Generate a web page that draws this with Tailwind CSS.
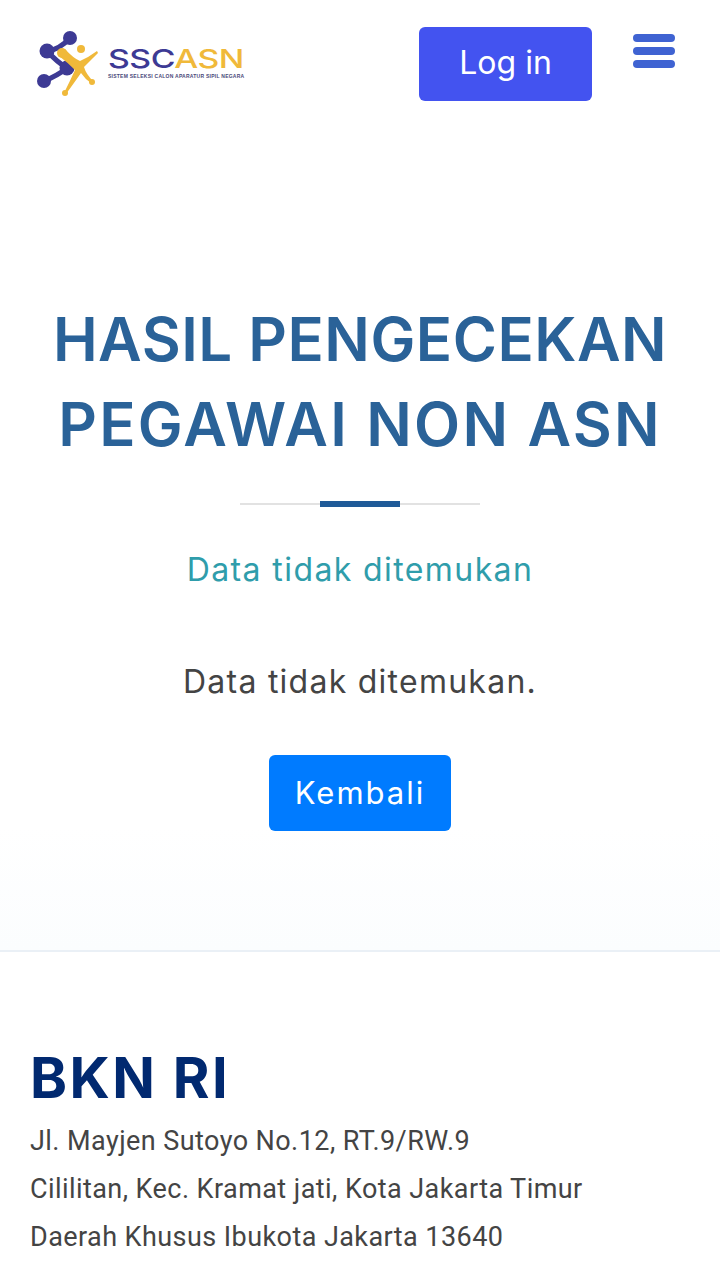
<!DOCTYPE html>
<html lang="en">
<head>
  <meta charset="UTF-8" />
  <meta name="viewport" content="width=device-width, initial-scale=1.0"/>
  <title>SSCASN</title>
  <script src="https://cdn.jsdelivr.net/npm/@tailwindcss/browser@4"></script>
</head>
<body class="bg-white font-['Inter',sans-serif] overflow-hidden h-[1267px]">
  <header class="h-[128px] flex items-start pl-[37px] pr-[45px]">
    <div class="flex items-start mt-[29px] w-[206px] shrink-0">
      <svg width="66" height="70" viewBox="0 0 66 70" class="shrink-0">
        <path d="M33 9 Q22 21 10 22 Q20 33 30 39 Q20 47 7 52" fill="none" stroke="#3d3a94" stroke-width="5"/>
        <g fill="#3d3a94">
          <circle cx="33" cy="9" r="7"/>
          <circle cx="10" cy="22" r="7.5"/>
          <circle cx="30" cy="39" r="7.5"/>
          <circle cx="7" cy="52" r="7"/>
        </g>
        <g fill="#f0b93a">
          <path d="M22 27 L28 20 Q36 29 43 32 Q52 28 60 22 L61 24 Q52 33 47 38 Q49 45 56 52 L54 54 Q48 50 44 44 Q37 54 29 65 L27 64 Q33 52 38 41 Q30 33 22 27 Z"/>
          <circle cx="44" cy="20" r="4"/>
          <circle cx="25" cy="24" r="5"/>
          <circle cx="28" cy="64" r="3"/>
          <circle cx="55" cy="53" r="3"/>
        </g>
      </svg>
      <div class="ml-[5px] mt-[18px] w-[135px] shrink-0">
        <div class="font-['Inter',sans-serif] font-medium text-[26px] leading-[23px] whitespace-nowrap w-[104px] scale-x-[1.3] origin-left tracking-[-0.4px]"><span class="text-[#3d3a94]">SSC</span><span class="text-[#f0b93a]">ASN</span></div>
        <div class="mt-[4px] font-['Liberation_Sans',sans-serif] text-[5px] leading-[5px] font-bold text-[#4a4a7a] whitespace-nowrap tracking-[0.25px]">SISTEM SELEKSI CALON APARATUR SIPIL NEGARA</div>
      </div>
    </div>
    <a class="ml-[176px] mt-[27px] w-[173px] h-[74px] pb-[3px] rounded-[6px] bg-[#4353f0] text-white text-[32px] flex items-center justify-center">Log in</a>
    <div class="ml-[41px] mt-[34px] flex flex-col gap-[5px] w-[42px]">
      <span class="h-[8px] rounded-full bg-[#3f63d2]"></span>
      <span class="h-[8px] rounded-full bg-[#3f63d2]"></span>
      <span class="h-[8px] rounded-full bg-[#3f63d2]"></span>
    </div>
  </header>

  <main class="h-[824px] pt-[169px] flex flex-col items-center text-center bg-gradient-to-b from-white from-85% to-[#fbfdfe] border-b-2 border-[#eaf0f6]">
    <h1 class="text-[60px] leading-[85px] font-semibold text-[#2a6298]"><span class="tracking-[0.5px]">HASIL PENGECEKAN</span><br><span class="tracking-[2.2px]">PEGAWAI NON ASN</span></h1>
    <div class="relative mt-[36px] w-[240px] h-[2px] bg-[#e2e2e2]">
      <span class="absolute left-[80px] top-[-2px] w-[80px] h-[6px] bg-[#1f5a98]"></span>
    </div>
    <p class="mt-[41px] text-[32px] leading-[48px] tracking-[1.4px] text-[#2f9dab]">Data tidak ditemukan</p>
    <p class="mt-[64px] text-[32px] leading-[48px] tracking-[1.25px] text-[#444444]">Data tidak ditemukan.</p>
    <a class="mt-[49px] w-[182px] h-[76px] rounded-[6px] bg-[#007bff] text-white text-[31px] tracking-[2px] flex items-center justify-center">Kembali</a>
  </main>

  <footer class="pl-[30px] pt-[93px]">
    <h2 class="text-[56px] leading-[66px] font-bold text-[#012970] tracking-[2.4px]">BKN RI</h2>
    <div class="font-['Roboto',sans-serif] text-[#444444] text-[27px] leading-[48px] tracking-[0.43px] mt-[6px]">
      <p>Jl. Mayjen Sutoyo No.12, RT.9/RW.9</p>
      <p>Cililitan, Kec. Kramat jati, Kota Jakarta Timur</p>
      <p>Daerah Khusus Ibukota Jakarta 13640</p>
    </div>
  </footer>
</body>
</html>
